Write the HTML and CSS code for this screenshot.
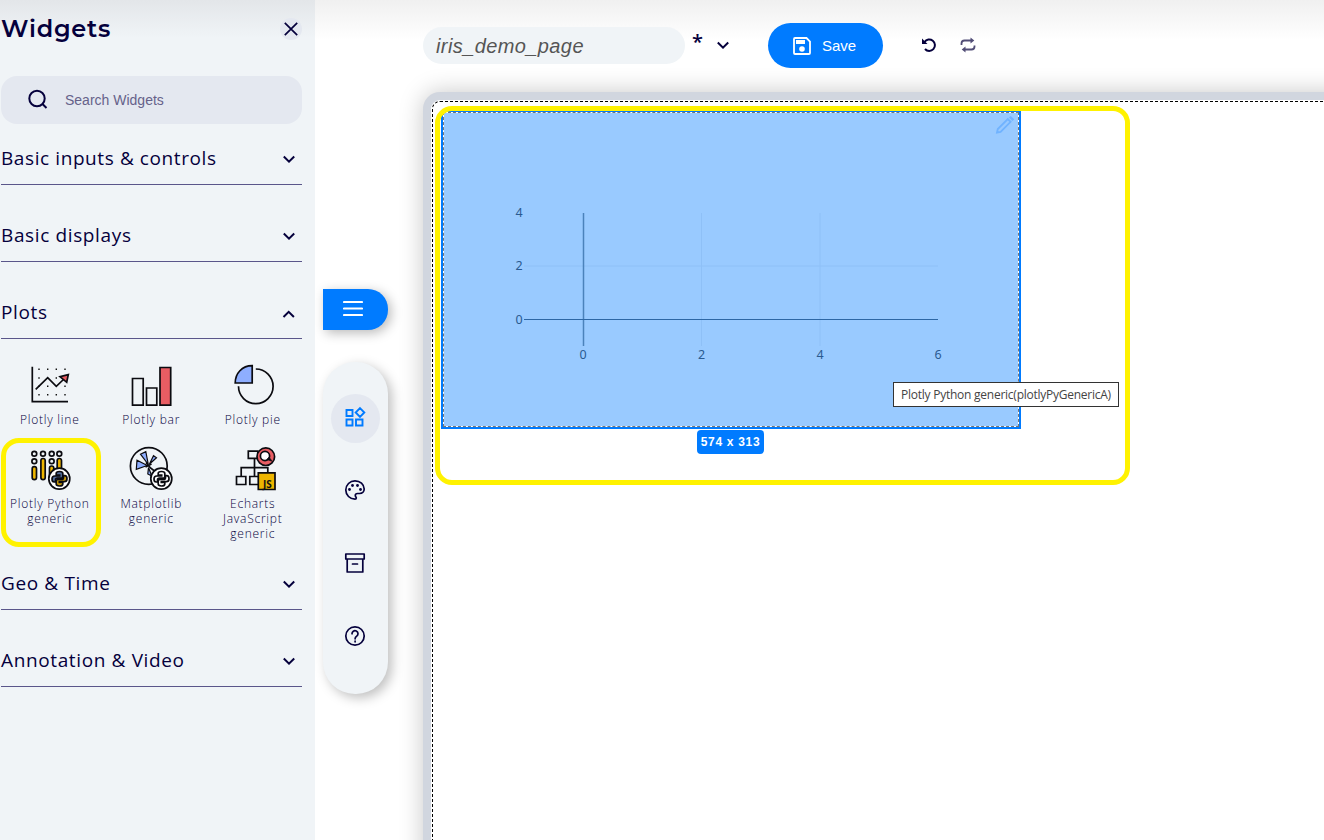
FILE: index.html
```html
<!DOCTYPE html>
<html lang="en">
<head>
<meta charset="utf-8">
<title>iris_demo_page</title>
<link rel="stylesheet" href="styles.css">
</head>
<body>
<div class="app">
  <aside class="sidebar">
    <header class="sidebar-head">
      <h1 class="sidebar-title">Widgets</h1>
      <button class="close"><svg width="22" height="22" viewBox="0 0 22 22"><path d="M4.800 4.800 17.200 17.200M17.200 4.800 4.800 17.200"/></svg></button>
    </header>
    <div class="search">
      <svg width="24" height="24" viewBox="0 0 24 24"><circle cx="11" cy="10.500" r="7.700"/><path d="M16.500 16l4 4"/></svg>
      <span>Search Widgets</span>
    </div>
    <section class="group"><h2 class="wide">Basic inputs &amp; controls</h2><svg class="chev" viewBox="0 0 16 16"><path d="M2.800 5.500 8 10.700l5.200-5.200"/></svg></section>
    <section class="group"><h2>Basic displays</h2><svg class="chev" viewBox="0 0 16 16"><path d="M2.800 5.500 8 10.700l5.200-5.200"/></svg></section>
    <section class="group"><h2>Plots</h2><svg class="chev" viewBox="0 0 16 16"><path d="M2.500 12 7.700 6.800l5.200 5.200"/></svg></section>
    <div class="tiles">
      <div class="tile">
        <svg viewBox="0 0 48 48"><path class="ln" d="M6.300 5.700V40.600H42"/><path class="dots" d="M13 8.300h.01M21.700 8.300h.01M30.300 8.300h.01M39 8.300h.01M13 17h.01M39 25.300h.01M13 25.300h.01M21.700 25.300h.01M13 33.700h.01M21.700 33.700h.01M30.300 33.700h.01M39 33.700h.01M30.300 17h.01"/><path class="ln" d="M9.700 28.300 21.700 16.700 30.300 25.300 38 18"/><path class="ln red" d="M42.300 13.700 34 15.700l6.700 5.600z"/></svg>
        <span>Plotly line</span>
      </div>
      <div class="tile">
        <svg viewBox="0 0 48 48"><path class="ln" d="M5.500 17.500h10.700v26.700H5.500zM19.500 27h10.300v17.200H19.500z"/><path class="ln red" d="M33 6.500h10.700v37.700H33z"/></svg>
        <span>Plotly bar</span>
      </div>
      <div class="tile">
        <svg viewBox="0 0 48 48"><path class="ln" d="M26.800 8A17.300 17.300 0 1 1 9.500 25.300"/><path class="ln blue" d="M23.200 4.700V22H6.200C6.200 12.300 13 4.700 23.200 4.700z"/></svg>
        <span>Plotly pie</span>
      </div>
      <div class="tile">
        <svg viewBox="0 0 48 48">
          <g class="ln"><circle cx="8.300" cy="8.700" r="2.400"/><circle cx="17" cy="8.700" r="2.400"/><circle cx="25.700" cy="8.700" r="2.400"/><circle cx="33.300" cy="8.700" r="2.400"/><circle cx="8.300" cy="16.200" r="2.400"/><circle cx="25.700" cy="16.200" r="2.400"/></g>
          <g class="ln gold"><rect x="6.200" y="21.700" width="4.300" height="13" rx="2.100"/><rect x="14.900" y="13.500" width="4.300" height="21.200" rx="2.100"/><rect x="23.500" y="21" width="4.300" height="13.700" rx="2.100"/><rect x="31.200" y="13.500" width="4.300" height="14" rx="2.100"/></g>
          <circle class="ln white" cx="33.300" cy="33.700" r="10.500"/>
          <path class="ln py-a" d="M33.500 26.500c-2.500 0-3.300.8-3.300 2v1.700h3.500v.8h-5c-1.800 0-2.700 1.300-2.700 3s.8 3 2.200 3h1.300v-1.800c0-1.200 1-2 2.200-2h3.400c1 0 1.700-.8 1.700-1.800v-3c0-1.200-1-1.900-3.300-1.900z"/>
          <path class="ln py-b" d="M33.500 41c2.500 0 3.300-.8 3.300-2v-1.500h-3.500v-.8h5c1.800 0 2.700-1.300 2.700-3s-.8-3-2.200-3h-1.300v1.800c0 1.200-1 2-2.200 2h-3.400c-1 0-1.700.8-1.700 1.800v2.800c0 1.200 1 1.900 3.300 1.900z"/>
        </svg>
        <span>Plotly Python generic</span>
      </div>
      <div class="tile">
        <svg viewBox="0 0 48 48">
          <circle class="ln" cx="21.800" cy="21" r="18.400"/>
          <path class="ln thin blue" d="M21.300 19.500 13.500 9.200l5.300-2.600zM20.300 20.500 10 15.200 9.300 24.300zM22.500 19 26.500 10.700l3 2zM21.500 22.500 20.800 29l4 2z"/>
          <path class="ln" d="M19 17.500l4.500 5.500 4 3M18.500 22l6-3"/>
          <circle class="ln white" cx="34.300" cy="33.700" r="10.500"/>
          <path class="ln" d="M34.500 26.500c-2.500 0-3.300.8-3.300 2v1.700h3.500v.8h-5c-1.800 0-2.700 1.300-2.700 3s.8 3 2.200 3h1.300v-1.800c0-1.200 1-2 2.200-2h3.400c1 0 1.700-.8 1.700-1.800v-3c0-1.200-1-1.900-3.300-1.900zM34.500 41c2.500 0 3.300-.8 3.300-2v-1.500h-3.500v-.8h5c1.800 0 2.700-1.300 2.700-3s-.8-3-2.200-3h-1.300v1.800c0 1.200-1 2-2.200 2h-3.400c-1 0-1.700.8-1.700 1.800v2.800c0 1.200 1 1.900 3.300 1.900z"/>
        </svg>
        <span>Matplotlib generic</span>
      </div>
      <div class="tile">
        <svg viewBox="0 0 48 48">
          <path class="ln" d="M19.300 6.200h9.500v7.200h-9.500zM25.500 13.400V31.500M12.200 31.500V22.700H38.800V28M7.500 31.500h9.300v8H7.500zM20.800 31.500h9v8h-9z"/>
          <circle class="ln red" cx="36.800" cy="11.700" r="8.800"/><circle class="ln white" cx="36" cy="11" r="4.600"/><path class="ln solid-dark" d="M37.500 14.500l2.500-2.500 3.500 4.500z"/>
          <path class="ln gold" d="M29.300 27.800h16.700v16.700H29.300z"/><text class="js" x="34" y="42.500">JS</text>
        </svg>
        <span>Echarts JavaScript generic</span>
      </div>
    </div>
    <section class="group"><h2>Geo &amp; Time</h2><svg class="chev" viewBox="0 0 16 16"><path d="M2.800 5.500 8 10.700l5.200-5.200"/></svg></section>
    <section class="group"><h2>Annotation &amp; Video</h2><svg class="chev" viewBox="0 0 16 16"><path d="M2.800 5.500 8 10.700l5.200-5.200"/></svg></section>
    <div class="callout callout-tile"></div>
  </aside>

  <nav class="rail">
    <button class="menu"><svg width="20" height="18" viewBox="0 0 20 18"><path d="M1 2h18M1 8.500h18M1 15h18"/></svg></button>
    <div class="pill">
      <span class="item active"><svg viewBox="0 0 24 24"><path d="M3.500 5h6v6h-6zM3.500 14.500h6v6h-6zM13 14.500h6.500v6H13zM17 3.200l4.300 4.300L17 11.800l-4.300-4.300z"/></svg></span>
      <span class="item"><svg viewBox="0 0 24 24"><path d="M12 2.800a9.200 9.200 0 1 0 0 18.400c1 0 1.300-.5 1.300-1.200 0-.9-1-1.300-1-2.500 0-1.200 1-2 2.300-2h2.100c2.700 0 4.500-2 4.500-4.400C21.200 6.200 17 2.800 12 2.800z"/><g class="spots"><circle cx="6.500" cy="11.500" r="1.400"/><circle cx="9.500" cy="7.500" r="1.400"/><circle cx="14.500" cy="7.500" r="1.400"/><circle cx="17.500" cy="11.500" r="1.400"/></g></svg></span>
      <span class="item"><svg viewBox="0 0 24 24"><path d="M2.800 3h18.400v5H2.800zM4.200 8v13h15.600V8M9.500 13h5"/></svg></span>
      <span class="item"><svg viewBox="0 0 24 24"><circle cx="12" cy="12" r="9.200"/><path d="M9 9.800a3 3 0 1 1 4.800 2.300c-1 .8-1.700 1.300-1.700 2.700M12.100 17v.8"/></svg></span>
    </div>
  </nav>

  <main class="main">
    <div class="toolbar">
      <div class="page-name">iris_demo_page</div>
      <span class="dirty">*</span>
      <svg class="chev pages" viewBox="0 0 16 16"><path d="M2.800 5.500 8 10.700l5.200-5.200"/></svg>
      <button class="save"><svg width="20" height="20" viewBox="0 0 20 20"><path d="M3 2h11.500L18 5.500V17a1 1 0 0 1-1 1H3a1 1 0 0 1-1-1V3a1 1 0 0 1 1-1z"/><path class="solid" d="M4 4h9v4H4z"/><circle class="solid" cx="10" cy="13" r="2.800"/></svg><span>Save</span></button>
      <svg class="undo" width="16" height="16" viewBox="0 0 16 16"><path d="M3.500 5A5.700 5.700 0 1 1 4 12"/><path class="solid" d="M1 1.500v5.500h5.500z"/></svg>
      <svg class="redo" width="18" height="18" viewBox="0 0 18 18"><path d="M2.500 9V7.500c0-1.700 1.300-3 3-3h7M15.500 9.500v1c0 1.700-1.300 3-3 3H5.500"/><path class="solid" d="M11.500 1.500 15.300 4.500 11.500 7.500zM6.500 10.500 2.700 13.500 6.500 16.500z"/></svg>
    </div>
    <div class="frame">
      <div class="canvas">
        <div class="widget">
          <div class="widget-body">
            <svg class="plot" width="574" height="313" viewBox="444 113 574 313">
              <path class="grid" d="M524 266H938M701.500 213V346M820 213V346"/>
              <path class="zero-y" d="M583.500 213V346"/><path class="zero-x" d="M524 319.500H938"/>
              <g class="ticks"><text x="583" y="359">0</text><text x="701.500" y="359">2</text><text x="820" y="359">4</text><text x="938" y="359">6</text><text x="519" y="217">4</text><text x="519" y="270">2</text><text x="519" y="324">0</text></g>
              <path class="pencil" d="M997 132.500l.8-3.500 10-10 2.800 2.800-10 10z"/><path class="pencil-cap" d="M1009 117.500l1.800-1.600 3.400 3.400-1.800 1.700z"/>
            </svg>
          </div>
          <span class="size">574 x 313</span>
          <span class="tip">Plotly Python generic(plotlyPyGenericA)</span>
        </div>
        <div class="callout callout-canvas"></div>
      </div>
    </div>
  </main>
</div>
</body>
</html>
```

FILE: styles.css
```css
* { box-sizing: border-box; }
body { margin: 0; overflow: hidden; background: #fff; color: #05003c; font-family: "Open Sans", "Noto Sans", sans-serif; }
button { border: 0; padding: 0; margin: 0; font: inherit; }
svg { display: block; fill: none; stroke: #05003c; flex: none; }
.app { display: flex; width: 1324px; height: 840px; overflow: hidden; background: linear-gradient(#f0f0f0, #fff 40px); }

.sidebar { position: relative; width: 315px; flex: none; padding: 0 13px 0 1px; background: linear-gradient(#e3e6e9, #f0f4f7 38px); }
.sidebar-head { display: flex; justify-content: space-between; height: 76px; padding-top: 12px; }
.sidebar-title { margin: 0; font: 600 24px/34px Montserrat, Inter, sans-serif; letter-spacing: .75px; }
.close { width: 22px; height: 22px; margin-top: 6px; border-radius: 50%; background: #e4e8f0; }
.close svg { stroke-width: 1.700; }
.search { display: flex; align-items: center; gap: 15px; height: 48px; padding-left: 25px; border-radius: 16px; background: #e4e8f0; color: #66628a; font: 14px "Liberation Sans", sans-serif; }
.search svg { stroke-width: 2; margin-left: -.5px; margin-right: .5px; }
.group { display: flex; justify-content: space-between; height: 77px; padding: 36px 5px 0 0; border-bottom: 1px solid #5a568a; }
.search + .group { margin-top: -16px; }
.group h2 { margin: 0; padding-top: 1px; font-size: 19px; line-height: 27px; font-weight: 400; letter-spacing: .63px; white-space: nowrap; }
.group .wide { letter-spacing: .59px; }
.chev { width: 16px; height: 16px; margin-top: 7px; stroke-width: 2; }
.tiles { display: grid; grid-template-columns: repeat(3, 101.500px); grid-auto-rows: 84px; height: 194px; margin-left: -2px; padding-top: 22px; }
.tile { display: flex; flex-direction: column; align-items: center; gap: 3px; font-size: 12px; line-height: 15px; font-weight: 300; letter-spacing: .75px; text-align: center; }
.tile svg { width: 48px; height: 48px; margin-left: -.5px; }
.tile span { width: 92px; }
.ln { stroke: #0b0b10; stroke-width: 1.700; fill: none; }
.thin { stroke-width: 1.200; }
.dots { stroke: #111; stroke-width: 1.400; stroke-linecap: square; }
.red { fill: #e85d63; }
.blue { fill: #8eaeff; }
.gold { fill: #edb500; }
.white { fill: #fff; }
.solid-dark { fill: #0b0b10; stroke-width: .5; }
.py-a { fill: #526d9b; }
.py-b { fill: #c99a08; }
.js { font: 700 10px "Open Sans", sans-serif; fill: #111; stroke: none; letter-spacing: 0; }
.callout { position: absolute; border: 5px solid #fff200; pointer-events: none; }
.callout-tile { left: 1px; top: 438px; width: 100px; height: 109px; border-radius: 18px; }

.rail { width: 108px; flex: none; padding: 289px 35px 0 8px; }
.menu { display: flex; align-items: center; justify-content: center; width: 65px; height: 41px; padding: 0 5px 1px 0; border-radius: 0 20px 20px 0; background: #007bff; box-shadow: 3px 3px 12px rgba(0,0,0,.28); }
.menu svg { stroke: #fff; stroke-width: 2.200; stroke-linecap: round; }
.pill { display: flex; flex-direction: column; align-items: center; gap: 24px; width: 65px; height: 332px; margin-top: 32px; padding-top: 32px; border-radius: 32px; background: #f0f4f7; box-shadow: 4px 4px 12px rgba(0,0,0,.25); }
.item { display: flex; align-items: flex-start; width: 49px; height: 49px; padding: 11px 0 0 12px; border-radius: 50%; }
.item svg { width: 24px; height: 24px; stroke-width: 1.700; stroke-linejoin: round; stroke-linecap: round; }
.active { background: #e4e8f0; }
.active svg { stroke: #007bff; stroke-width: 1.900; stroke-linejoin: miter; }
.spots { fill: #05003c; stroke: none; }

.main { flex: 1; min-width: 0; }
.toolbar { display: flex; height: 92px; padding-top: 23px; }
.page-name { width: 262px; height: 37px; margin-top: 4px; padding-left: 13px; border-radius: 18.500px; background: #f0f4f7; color: #555; font: italic 20px/38px "Liberation Sans", sans-serif; letter-spacing: .4px; }
.dirty { width: 12px; margin: 7px 0 0 7px; font: 600 20px/24px "Open Sans", sans-serif; }
.pages { margin: 14px 0 0 11px; }
.save { display: flex; align-items: center; gap: 10px; width: 115px; height: 45px; margin-left: 37px; padding-left: 24px; border-radius: 22.500px; background: #007bff; color: #fff; font: 15px "Liberation Sans", sans-serif; }
.save svg { stroke: #fff; stroke-width: 1.800; }
.save .solid { fill: #fff; stroke: none; }
.undo { margin: 14px 0 0 38px; stroke-width: 2; }
.undo .solid { fill: #05003c; stroke: none; }
.redo { margin: 13px 0 0 22px; stroke: #514d76; stroke-width: 1.800; }
.redo .solid { fill: #514d76; stroke: none; }

.frame { width: 930px; height: 780px; padding: 9px; border-radius: 17px 0 0 0; background: #d1d6df; box-shadow: 0 0 24px rgba(0,0,0,.22); }
.canvas { position: relative; height: 770px; padding: 8px; border: 1px dashed #000; border-radius: 8px 0 0 0; background: #fff; box-shadow: 0 0 0 1px #fff; }
.widget { position: relative; width: 580px; height: 319px; border: 2px solid #007bff; }
.widget-body { width: 576px; height: 315px; border: 1px dashed #777; background: #99caff; background-clip: padding-box; }
.plot .grid { stroke: #8ec0f7; }
.plot .zero-x { stroke: #2d67a5; }
.plot .zero-y { stroke: #4b82bb; stroke-width: 1.500; }
.ticks { fill: #2a5a91; stroke: none; font: 12.500px "Noto Sans", sans-serif; text-anchor: middle; }
.pencil { stroke: #70b3ff; stroke-width: 1.800; }
.pencil-cap { fill: #70b3ff; stroke: none; }
.size { position: absolute; left: 254px; top: 318px; width: 67px; height: 24px; border-radius: 4px; background: #007bff; color: #fff; font: 700 12px/24px "Liberation Sans", sans-serif; letter-spacing: .7px; text-align: center; white-space: nowrap; }
.tip { position: absolute; left: 450px; top: 270px; width: 226px; height: 25px; border: 1px solid #333; background: #fff; color: #444; font: 12px/23px "Open Sans", sans-serif; letter-spacing: -.25px; text-align: center; white-space: nowrap; }
.callout-canvas { left: 2px; top: 4px; width: 695px; height: 379px; border-radius: 17px; }
```
